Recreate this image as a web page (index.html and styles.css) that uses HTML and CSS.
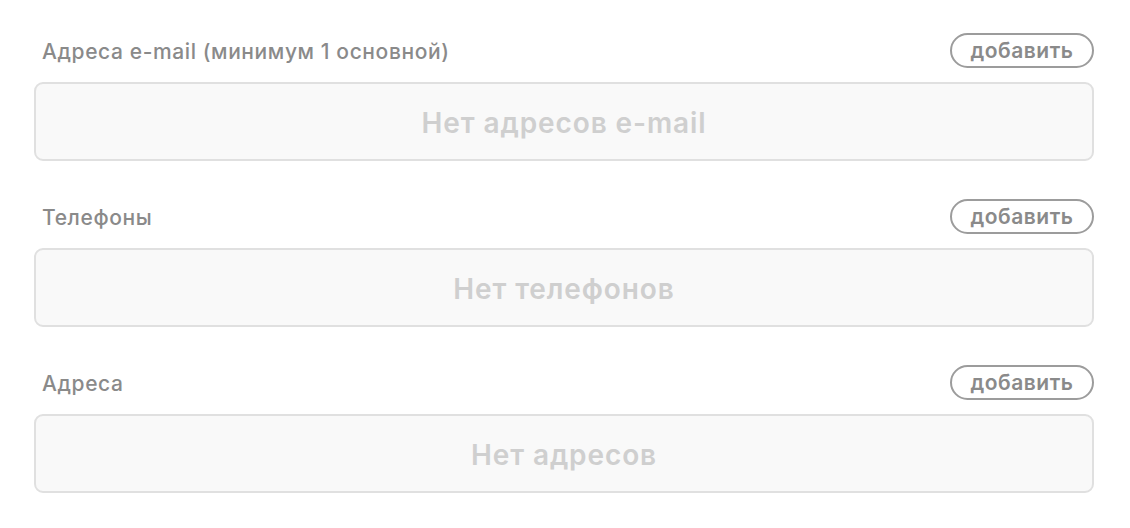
FILE: index.html
```html
<!DOCTYPE html>
<html lang="ru">
<head>
<meta charset="utf-8">
<link rel="stylesheet" href="styles.css">
</head>
<body>
<div class="page">
  <section class="group">
    <div class="head">
      <span class="label">Адреса e-mail (минимум 1 основной)</span>
      <button class="add">добавить</button>
    </div>
    <div class="empty">Нет адресов e-mail</div>
  </section>
  <section class="group">
    <div class="head">
      <span class="label">Телефоны</span>
      <button class="add">добавить</button>
    </div>
    <div class="empty">Нет телефонов</div>
  </section>
  <section class="group">
    <div class="head">
      <span class="label">Адреса</span>
      <button class="add">добавить</button>
    </div>
    <div class="empty">Нет адресов</div>
  </section>
</div>
</body>
</html>
```
FILE: styles.css
```css
html, body {
  margin: 0;
  padding: 0;
  background: #ffffff;
}
body {
  font-family: Inter, "Noto Sans", sans-serif;
}
.page {
  width: 1060px;
  margin-left: 34px;
  padding-top: 33px;
  display: flex;
  flex-direction: column;
  gap: 38px;
}
.group {
  display: flex;
  flex-direction: column;
  gap: 14px;
}
.head {
  display: flex;
  justify-content: space-between;
  align-items: center;
  height: 35px;
}
.label {
  padding-left: 8px;
  padding-top: 2px;
  font-size: 21px;
  font-weight: 500;
  color: #8a8a8a;
  letter-spacing: 0.6px;
}
.add {
  height: 35px;
  box-sizing: border-box;
  padding: 0;
  border: 2px solid #9c9c9c;
  border-radius: 18px;
  background: #fff;
  font-family: inherit;
  font-size: 21px;
  font-weight: 600;
  color: #8a8a8a;
  letter-spacing: 0.5px;
  width: 144px;
}
.empty {
  height: 79px;
  box-sizing: border-box;
  padding-top: 3px;
  border: 2px solid #e0e0e0;
  border-radius: 9px;
  background: #f9f9f9;
  display: flex;
  align-items: center;
  justify-content: center;
  font-size: 28px;
  font-weight: 600;
  color: #cfcfcf;
  letter-spacing: 0.9px;
}
```
